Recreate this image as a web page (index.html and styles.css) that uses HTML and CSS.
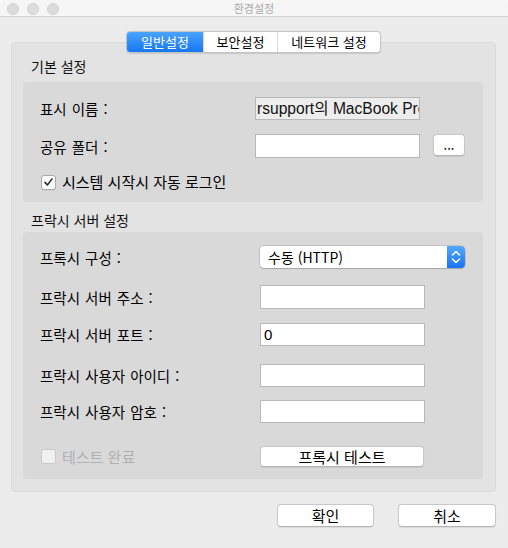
FILE: index.html
```html
<!DOCTYPE html>
<html lang="ko">
<head>
<meta charset="utf-8">
<title>환경설정</title>
<link rel="stylesheet" href="styles.css">
</head>
<body>
<div class="window">
  <div class="titlebar">
    <div class="lights"><span class="light"></span><span class="light"></span><span class="light"></span></div>
    <div class="title">환경설정</div>
  </div>
  <div class="content">
    <div class="tabs">
      <div class="tab active">일반설정</div>
      <div class="tab">보안설정</div>
      <div class="tab">네트워크 설정</div>
    </div>
    <div class="groupbox">
      <div class="section-label">기본 설정</div>
      <div class="panel panel-basic">
        <div class="row r1">
          <span class="label lw1">표시 이름 :</span>
          <div class="field readonly">rsupport의 MacBook Pro</div>
        </div>
        <div class="row r2">
          <span class="label lw1">공유 폴더 :</span>
          <div class="field"></div>
          <button class="btn dots">...</button>
        </div>
        <div class="row r3">
          <span class="checkbox checked"><svg viewBox="0 0 14 14" width="14" height="14"><path d="M3.2 7.4 L5.8 10.2 L10.8 3.6" fill="none" stroke="#262626" stroke-width="1.6" stroke-linecap="round" stroke-linejoin="round"/></svg></span>
          <span class="check-text">시스템 시작시 자동 로그인</span>
        </div>
      </div>
      <div class="section-label second">프락시 서버 설정</div>
      <div class="panel panel-proxy">
        <div class="row p1">
          <span class="label lw2">프록시 구성 :</span>
          <div class="select">
            <span class="select-text">수동 (HTTP)</span>
            <span class="stepper"><svg viewBox="0 0 18 22" width="18" height="22"><path d="M5.5 9 L9 5.5 L12.5 9 M5.5 13 L9 16.5 L12.5 13" fill="none" stroke="#fff" stroke-width="1.5" stroke-linecap="round" stroke-linejoin="round"/></svg></span>
          </div>
        </div>
        <div class="row p2">
          <span class="label lw2">프락시 서버 주소 :</span>
          <div class="field f2"></div>
        </div>
        <div class="row p3">
          <span class="label lw2">프락시 서버 포트 :</span>
          <div class="field f2">0</div>
        </div>
        <div class="row p4">
          <span class="label lw2">프락시 사용자 아이디 :</span>
          <div class="field f2"></div>
        </div>
        <div class="row p5">
          <span class="label lw2">프락시 사용자 암호 :</span>
          <div class="field f2"></div>
        </div>
        <div class="row p6">
          <span class="checkmark-wrap lw2">
            <span class="checkbox disabled"></span>
            <span class="check-text dim">테스트 완료</span>
          </span>
          <button class="btn test">프록시 테스트</button>
        </div>
      </div>
    </div>
    <div class="footer">
      <button class="btn foot">확인</button>
      <button class="btn foot cancel">취소</button>
    </div>
  </div>
</div>
</body>
</html>
```
FILE: styles.css
```css
* { box-sizing: border-box; }
html, body { margin: 0; padding: 0; background: #ffffff; }
body {
  font-family: "Liberation Sans", "Noto Sans CJK KR", sans-serif;
  font-size: 13px;
  color: #111;
}
.window {
  width: 508px;
  height: 548px;
  background: #ececec;
  border-radius: 5px 5px 0 0;
  overflow: hidden;
}
.titlebar {
  height: 17px;
  background: #f6f6f6;
  border-bottom: 1px solid #d3d3d3;
  position: relative;
  display: flex;
  align-items: center;
  justify-content: center;
}
.lights {
  position: absolute;
  left: 7px;
  top: 3px;
  display: flex;
  gap: 8px;
}
.light {
  width: 12px;
  height: 12px;
  border-radius: 50%;
  background: #dcdcdc;
  border: 1px solid #d0d0d0;
}
.title {
  font-family: "Noto Sans CJK KR", sans-serif;
  font-size: 11px;
  color: #a8a8a8;
  line-height: 16px;
}
.content {
  padding: 14px 12px 0 11px;
}
.tabs {
  display: flex;
  margin-left: 115px;
  width: 255px;
  height: 22px;
  border: 1px solid #c4c4c4;
  border-radius: 4px;
  background: #fff;
  position: relative;
  z-index: 2;
  overflow: hidden;
  box-shadow: 0 0.5px 1px rgba(0,0,0,0.12);
}
.tab {
  font-family: "Noto Sans CJK KR", sans-serif;
  font-size: 13px;
  line-height: 20px;
  text-align: center;
  color: #000;
  border-left: 1px solid #d6d6d6;
}
.tab:nth-child(1) { width: 76px; border-left: 0; }
.tab:nth-child(2) { width: 74px; }
.tab:nth-child(3) { flex: 1; }
.tab.active {
  background: linear-gradient(#4aa3ff, #1677f2);
  color: #fff;
}
.groupbox {
  margin-top: -11px;
  width: 485px;
  height: 450px;
  background: #e3e3e3;
  border: 1px solid #dadada;
  border-radius: 4px;
  padding: 0 12px 0 11px;
}
.section-label {
  font-family: "Noto Sans CJK KR", sans-serif;
  font-size: 14px;
  line-height: 16px;
  margin-top: 15px;
  padding-left: 8px;
  height: 24px;
}
.section-label.second {
  margin-top: 10px;
  height: 20px;
}
.panel {
  background: #d9d9d9;
  border-radius: 4px;
  padding-left: 17px;
}
.panel-basic { height: 120px; padding-top: 15px; }
.panel-proxy { height: 247px; padding-top: 14px; }
.row {
  display: flex;
  align-items: center;
}
.label {
  font-family: "Noto Sans CJK KR", sans-serif;
  font-size: 14.5px;
  word-spacing: 1px;
  flex: none;
  color: #000;
}
.lw1 { width: 215px; }
.lw2 { width: 220px; }
.field {
  width: 165px;
  height: 24px;
  background: #fff;
  border: 1px solid #b8b8b8;
  font-size: 15px;
  line-height: 22px;
  padding: 0 3px;
  white-space: nowrap;
  overflow: hidden;
  color: #000;
}
.field.readonly {
  background: #ededed;
  padding: 0 1px;
  height: 23px;
  line-height: 21px;
  font-size: 15.6px;
  color: #111;
}
.r1 { height: 23px; }
.r2 { height: 24px; margin-top: 14px; }
.r3 { height: 14px; margin-top: 17px; }
.dots {
  margin-left: 13px;
  width: 32px;
  height: 22px;
  margin-top: -2px;
  line-height: 14px;
  padding-bottom: 6px;
}
.checkbox {
  width: 15px;
  height: 15px;
  background: #fff;
  border: 1px solid #a9a9a9;
  border-radius: 3px;
  display: inline-flex;
  align-items: center;
  justify-content: center;
  flex: none;
  margin-left: 1px;
  box-shadow: 0 0.5px 0.5px rgba(0,0,0,0.1);
}
.checkbox svg { display: block; }
.checkbox.disabled {
  background: #f0f0f0;
  border-color: #c9c9c9;
  box-shadow: none;
}
.check-text {
  font-family: "Noto Sans CJK KR", sans-serif;
  font-size: 15px;
  margin-left: 6px;
  line-height: 14px;
  color: #000;
}
.check-text.dim { color: #b0b0b0; }
.checkmark-wrap { display: flex; align-items: center; }
.select {
  width: 205px;
  height: 22px;
  background: #fff;
  border-radius: 4px;
  box-shadow: 0 0 0 0.5px rgba(0,0,0,0.2), 0 1px 1px rgba(0,0,0,0.15);
  display: flex;
  align-items: center;
  overflow: hidden;
}
.select-text {
  flex: 1;
  font-family: "Noto Sans CJK KR", sans-serif;
  font-size: 14px;
  padding-left: 8px;
  color: #000;
}
.stepper {
  width: 18px;
  height: 22px;
  background: linear-gradient(#52a8ff, #1a73f0);
  display: block;
}
.stepper svg { display: block; }
.p1 { height: 22px; }
.p2 { height: 24px; margin-top: 17px; }
.p3 { height: 23px; margin-top: 14px; }
.p4 { height: 23px; margin-top: 18px; }
.p5 { height: 23px; margin-top: 13px; }
.p6 { height: 21px; margin-top: 23px; }
.f2 { height: inherit; }
.btn {
  font-family: "Noto Sans CJK KR", sans-serif;
  font-size: 15px;
  color: #000;
  background: #fff;
  border: 1px solid #c8c8c8;
  border-bottom-color: #b4b4b4;
  border-radius: 4px;
  padding: 0;
  box-shadow: 0 0.5px 1px rgba(0,0,0,0.08);
}
.dots { font-size: 13px; }
.test {
  width: 164px;
  height: 21px;
  line-height: 18px;
}
.footer {
  display: flex;
  padding-left: 266px;
  gap: 24px;
  margin-top: 12px;
}
.foot {
  width: 97px;
  height: 23px;
  line-height: 20px;
}
.foot.cancel { width: 98px; }
```
